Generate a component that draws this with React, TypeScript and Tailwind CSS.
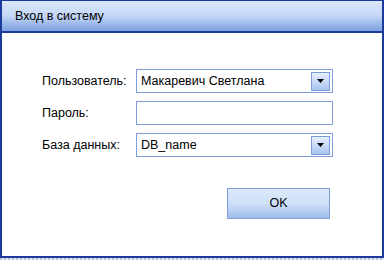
const font = { fontFamily: '"Liberation Sans", Arial, sans-serif' };

function Combo({ value }: { value: string }) {
  return (
    <div className="flex h-[24px] w-[197px] items-center border border-[#7f9dd9] bg-white pl-[4px] pr-[2px]">
      <span className="flex-1 text-[12.5px] text-black">{value}</span>
      <div className="flex h-[19px] w-[19px] items-center justify-center border border-[#7f9dd9] bg-gradient-to-b from-[#e6f0fd] to-[#a9c4ef]">
        <svg width="7" height="4" viewBox="0 0 7 4" aria-hidden="true">
          <path d="M0 0h7L3.5 4z" fill="#000" />
        </svg>
      </div>
    </div>
  );
}

export default function App() {
  return (
    <div className="flex h-[260px] w-[384px] flex-col bg-white" style={font}>
      <div className="flex h-[258px] flex-col border-x-2 border-b-2 border-t border-[#1a3a9c]">
        <div className="flex h-[32px] items-center border-b-2 border-[#1a3a9c] bg-gradient-to-b from-[#dae8fb] via-[#c3d7f6] to-[#7c9fe0] pl-[13px] text-[12.5px] text-black">
          Вход в систему
        </div>
        <div className="flex flex-1 flex-col px-[40px] pt-[36px]">
          <div className="grid grid-cols-[94px_197px] items-center gap-y-[8px] text-[12.5px] text-black">
            <span>Пользователь:</span>
            <Combo value="Макаревич Светлана" />
            <span>Пароль:</span>
            <div className="h-[24px] w-[197px] border border-[#7f9dd9] bg-white" />
            <span>База данных:</span>
            <Combo value="DB_name" />
          </div>
          <div className="mt-[31px] flex justify-end pr-[12px]">
            <button className="h-[31px] w-[103px] border border-[#7f9dd9] bg-gradient-to-b from-[#dde9fb] via-[#cfe0f8] to-[#9fbcec] text-[12.5px] text-black">
              OK
            </button>
          </div>
        </div>
      </div>
      <div className="h-[2px] bg-[repeating-linear-gradient(90deg,#b8c0d0_0_2px,#e8ecf2_2px_4px)]" />
    </div>
  );
}
